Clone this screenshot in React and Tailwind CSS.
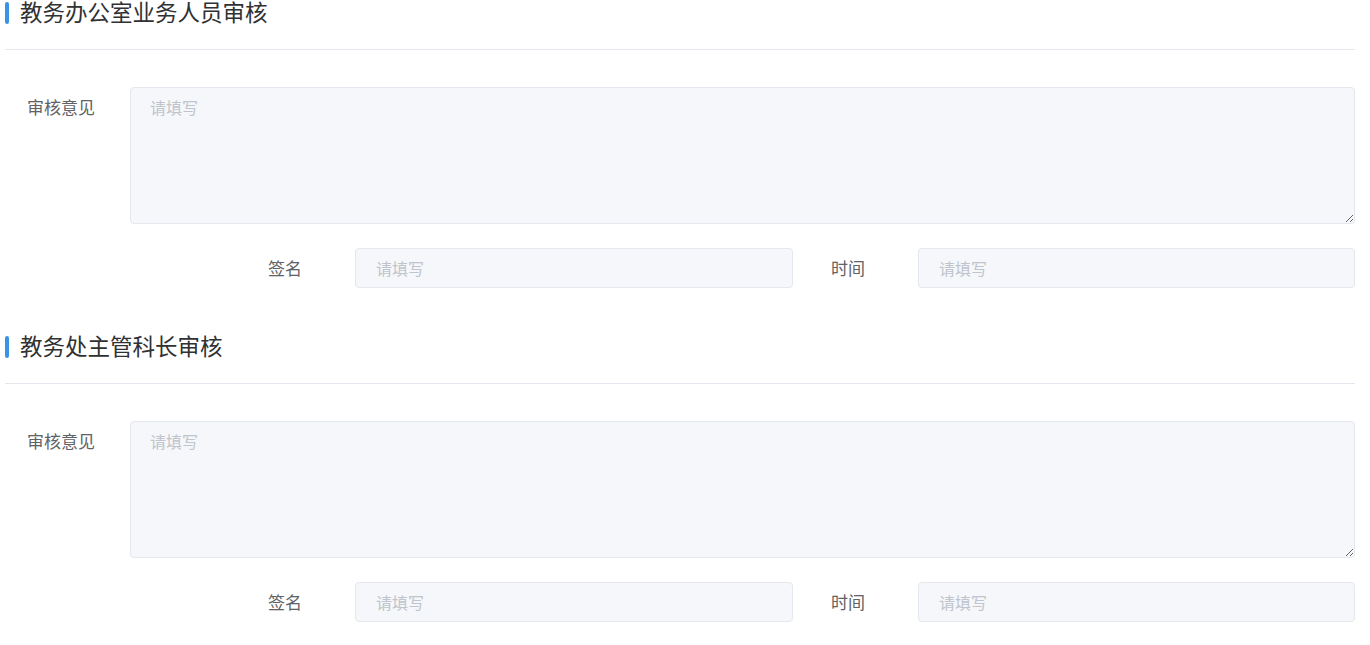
import React from 'react'

const font = { fontFamily: '"Noto Sans CJK SC", "Noto Sans", sans-serif' }

function Section({ title, className = '' }) {
  return (
    <div className={className}>
      <div className="flex items-center h-[26px]">
        <span className="w-[4px] h-[22px] rounded-full bg-[#3b93e6]"></span>
        <h2 className="ml-[11px] mb-[5px] text-[22.5px] leading-[26px] text-[#303133] font-normal whitespace-nowrap">{title}</h2>
      </div>
      <div className="mt-[23px] border-t border-[#e4e7ed]"></div>

      <div className="flex mt-[37px]">
        <label className="w-[125px] shrink-0 pr-[13px] text-center text-[17px] leading-[40px] text-[#606266]">审核意见</label>
        <textarea
          placeholder="请填写"
          className="flex-1 h-[137px] rounded-[4px] border border-[#e4e7ed] bg-[#f5f7fa] px-[19px] py-[7px] text-[16px] leading-[24px] text-[#606266] placeholder:text-[#c0c4cc] outline-none resize-y"
        />
      </div>

      <div className="flex mt-[24px] ml-[225px]">
        <label className="w-[125px] shrink-0 pr-[15px] text-center text-[17px] leading-[40px] text-[#606266]">签名</label>
        <input
          placeholder="请填写"
          className="w-[438px] h-[40px] rounded-[4px] border border-[#e4e7ed] bg-[#f5f7fa] px-[20px] text-[16px] text-[#606266] placeholder:text-[#c0c4cc] outline-none"
        />
        <label className="w-[125px] shrink-0 pr-[15px] text-center text-[17px] leading-[40px] text-[#606266]">时间</label>
        <input
          placeholder="请填写"
          className="flex-1 h-[40px] rounded-[4px] border border-[#e4e7ed] bg-[#f5f7fa] px-[20px] text-[16px] text-[#606266] placeholder:text-[#c0c4cc] outline-none"
        />
      </div>
    </div>
  )
}

export default function App() {
  return (
    <div className="min-h-screen bg-white" style={font}>
      <div className="ml-[5px] w-[1350px]">
        <Section title="教务办公室业务人员审核" />
        <Section title="教务处主管科长审核" className="mt-[46px]" />
      </div>
    </div>
  )
}
